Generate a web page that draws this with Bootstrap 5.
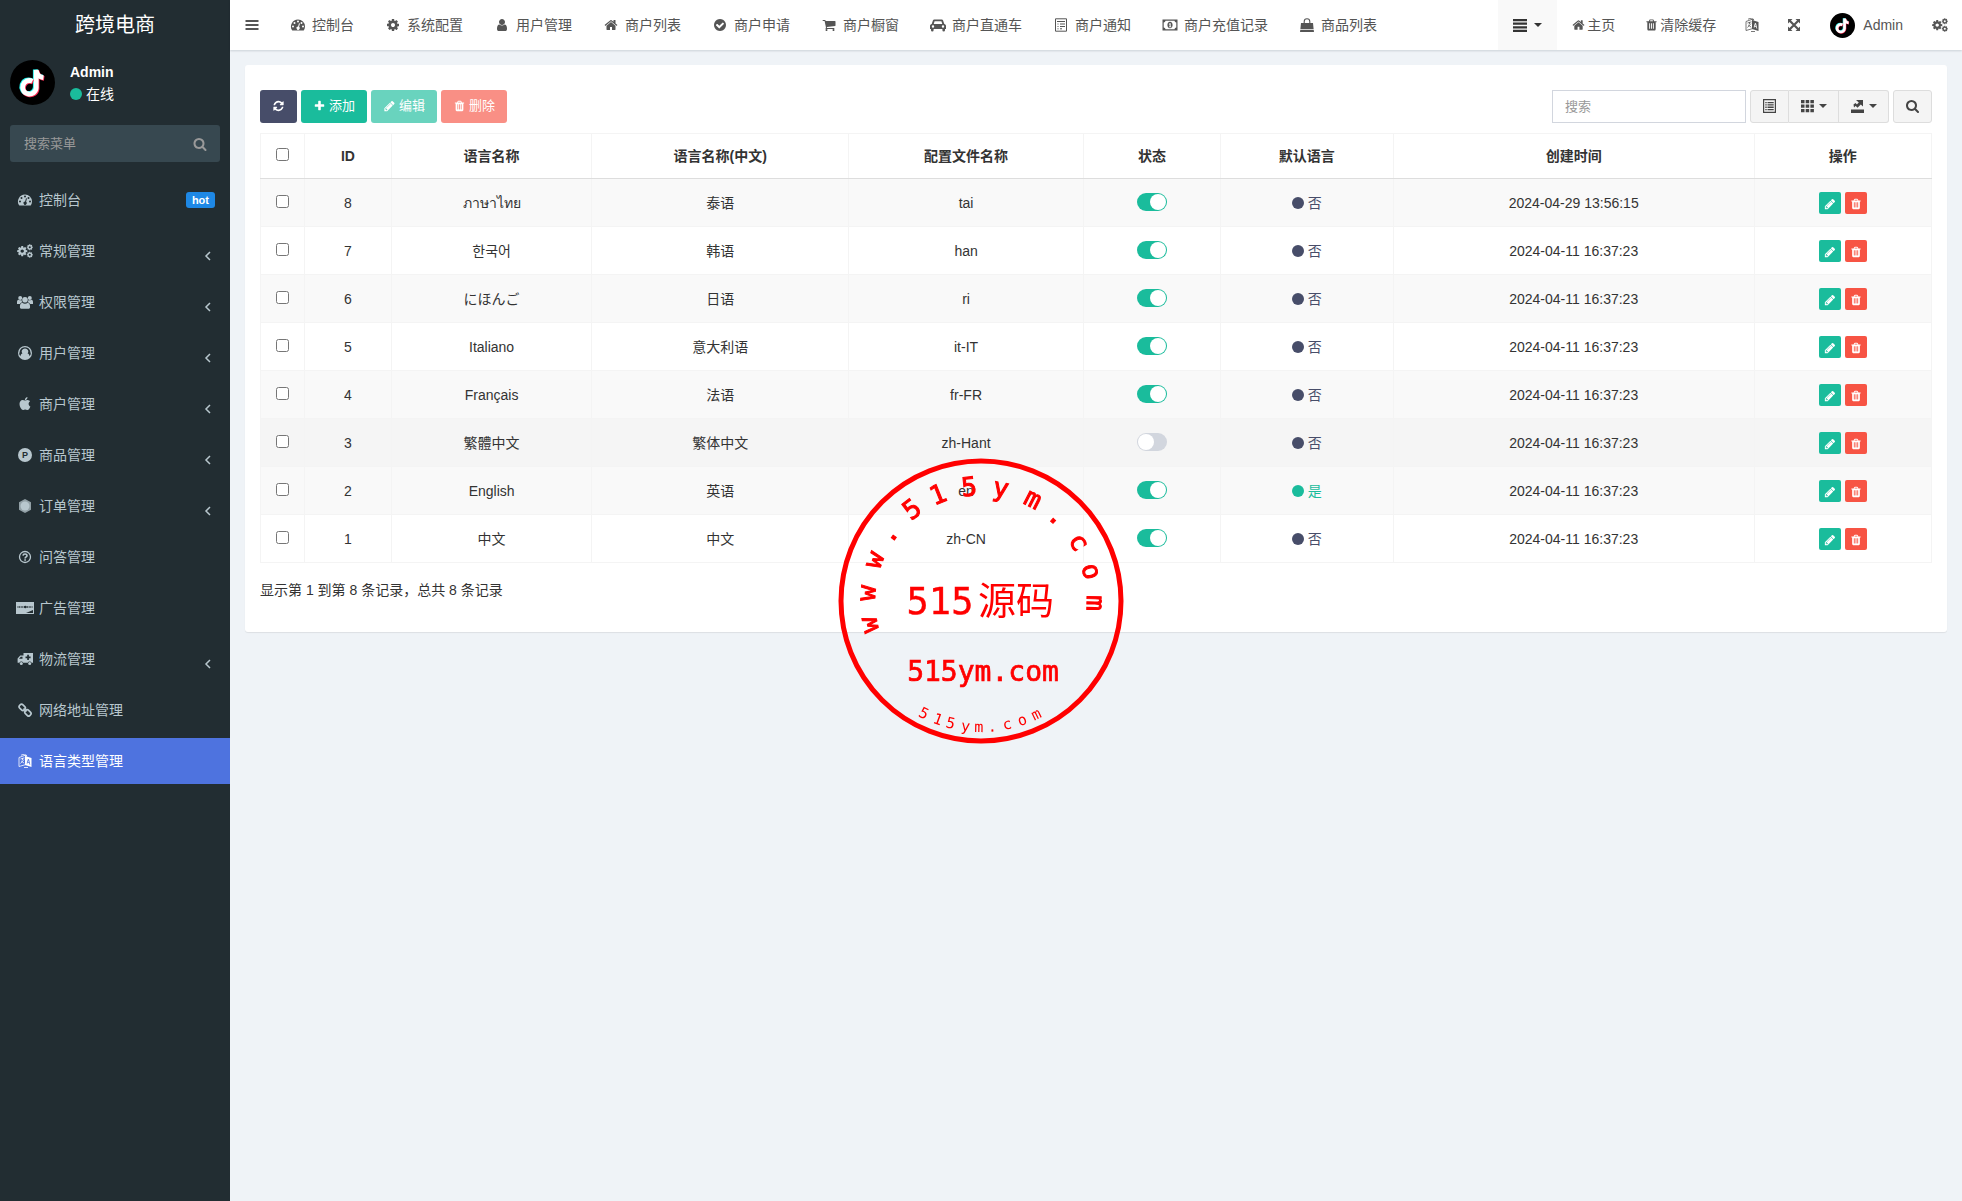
<!DOCTYPE html>
<html lang="zh-CN">
<head>
<meta charset="utf-8">
<meta name="viewport" content="width=device-width, initial-scale=1">
<title>跨境电商</title>
<link href="https://cdn.jsdelivr.net/npm/bootstrap@5.3.0/dist/css/bootstrap.min.css" rel="stylesheet">
<style>
body{font-family:"Liberation Sans","Noto Sans CJK SC","Noto Sans",sans-serif;font-size:14px;line-height:20px;color:#333;background:#eff3f7}
a{text-decoration:none;color:inherit}
.ico{width:14px;height:14px;fill:currentColor;flex:none;vertical-align:-2px}
.ico-fw{width:18px}
.ico-wide{width:16px}
.side{width:230px;flex:none;background:#222d32;color:#b8c7ce}
.brand{height:50px;font-size:20px;color:#fff}
.me{gap:15px;padding:10px;color:#fff;line-height:22px}
.me .pic{width:45px;height:45px}
.dot{display:inline-block;width:12px;height:12px;border-radius:50%;background:currentColor;vertical-align:-1px}
.teal{color:#1abc9c}.navy{color:#474d69}
.find{height:37px;margin:10px 10px 15px;background:#374850;border-radius:3px;color:#999;padding-right:13px}
.find input{background:none;border:0;outline:0;color:#999;font-size:13px;padding:0 14px;min-width:0}
.find input::placeholder,.seek::placeholder{color:#999;opacity:1}
.menu a{height:46px;margin-bottom:5px;padding:0 15px 0 16px;gap:5px}
.menu .chev{margin:9px 2px 0 auto;width:10px;height:10px;fill:none;stroke:currentColor;stroke-width:1.5}
.menu .on{background:#4e73df;color:#fff}
.hot{margin-left:auto;background:#1e88e5;border-radius:3px;font-size:11px;line-height:16px;padding:0 6px;color:#fff;font-weight:700}
.top{height:50px;background:#fff;color:#555;box-shadow:0 1px 2px rgba(0,21,41,.15);position:relative}
.top a,.top button{height:50px;padding:0 15px;gap:5px;white-space:nowrap;border:0;background:none;color:inherit}
.top .tight{gap:2px}
.top .tight .ico{width:13px}
.top .slim{padding:0 14px}
.top .pick{background:#f9f9f9;color:#333;gap:7px}
.caret{border:4px solid transparent;border-top-color:currentColor;border-bottom:0}
.panel{margin:15px;background:#fff;border-radius:3px;padding:25px 15px 32px;box-shadow:0 1px 1px rgba(0,0,0,.08)}
.tool{height:33px;font-size:13px;line-height:18px;border-radius:3px;border:0;padding:0 12px 2px;color:#fff;display:flex;align-items:center;gap:3px}
.tool .ico{width:13px;height:12px}
.tool:disabled{opacity:.65}
.b-navy{background:#474d69}.b-teal{background:#1abc9c}.b-red{background:#f75444}
.grey{background:#f4f4f4;border:1px solid #ddd;color:#444;padding:0 11px 2px;gap:4px}
.grey .ico{width:15px;height:14px}
.seek{width:194px;height:33px;border:1px solid #d2d6de;border-radius:0;font-size:13px;padding:0 12px}
.grid{table-layout:fixed;margin:10px 0 17px;--bs-table-color:#333;--bs-table-striped-color:#333;--bs-table-striped-bg:#f9f9f9;border-color:#f4f4f4;text-align:center;vertical-align:middle}
.grid>:not(caption)>*>*{padding:0 8px;height:48px}
.grid>thead>tr>th{height:45px;border-bottom:1px solid #ddd;vertical-align:middle}
.grid .over>*{--bs-table-bg:#f5f5f5;--bs-table-accent-bg:#f5f5f5}
.grid input{width:13px;height:13px;display:block;margin:0 auto 3px}
.grid .form-check-input{width:30px;height:18px;border:0;margin:0 auto 2px;background-color:#d2d6de;background-size:16px 16px;background-position:1px center;--bs-form-switch-bg:url("data:image/svg+xml,%3csvg xmlns='http://www.w3.org/2000/svg' viewBox='-4 -4 8 8'%3e%3ccircle r='4' fill='%23fff'/%3e%3c/svg%3e");background-image:var(--bs-form-switch-bg);border-radius:9px;float:none;background-repeat:no-repeat;appearance:none}
.grid .form-check-input:checked{background-color:#1abc9c;background-position:13px center}
.act{width:22px;height:22px;border:0;border-radius:2px;color:#fff;padding:0;line-height:18px}
.act .ico{width:12px;height:12px}
.seal{position:fixed;left:50%;top:50%;width:286px;height:286px;transform:translate(-50%,-50%);pointer-events:none;fill:red;font-family:"DejaVu Sans Mono",monospace;text-anchor:middle}
</style>
<script src="https://cdn.jsdelivr.net/npm/bootstrap@5.3.0/dist/js/bootstrap.bundle.min.js"></script>
</head>
<body>
<svg class="d-none" xmlns="http://www.w3.org/2000/svg">
<symbol id="home" viewBox="0 0 1792 1792"><path d="M1472 992v480q0 26-19 45t-45 19h-384v-384h-256v384h-384q-26 0-45-19t-19-45v-480q0-1 .5-3t.5-3l575-474 575 474q1 2 1 6zm223-69l-62 74q-8 9-21 11h-3q-13 0-21-7l-692-577-692 577q-12 8-24 7-13-2-21-11l-62-74q-8-10-7-23.5t11-21.5l719-599q32-26 76-26t76 26l244 204v-195q0-14 9-23t23-9h192q14 0 23 9t9 23v408l219 182q10 8 11 21.5t-7 23.5z"/></symbol>
<symbol id="search" viewBox="0 0 1792 1792"><path d="M1216 832q0-185-131.5-316.5t-316.5-131.5-316.5 131.5-131.5 316.5 131.5 316.5 316.5 131.5 316.5-131.5 131.5-316.5zm512 832q0 52-38 90t-90 38q-54 0-90-38l-343-342q-179 124-399 124-143 0-273.5-55.5t-225-150-150-225-55.5-273.5 55.5-273.5 150-225 225-150 273.5-55.5 273.5 55.5 225 150 150 225 55.5 273.5q0 220-124 399l343 343q37 37 37 90z"/></symbol>
<symbol id="plus" viewBox="0 0 1792 1792"><path d="M1600 736v192q0 40-28 68t-68 28h-416v416q0 40-28 68t-68 28h-192q-40 0-68-28t-28-68v-416h-416q-40 0-68-28t-28-68v-192q0-40 28-68t68-28h416v-416q0-40 28-68t68-28h192q40 0 68 28t28 68v416h416q40 0 68 28t28 68z"/></symbol>
<symbol id="pencil" viewBox="0 0 1792 1792"><path d="M491 1536l91-91-235-235-91 91v107h128v128h107zm523-928q0-22-22-22-10 0-17 7l-542 542q-7 7-7 17 0 22 22 22 10 0 17-7l542-542q7-7 7-17zm-54-192l416 416-832 832h-416v-416zm683 96q0 53-37 90l-166 166-416-416 166-165q36-38 90-38 53 0 91 38l235 234q37 39 37 91z"/></symbol>
<symbol id="trash" viewBox="0 0 1792 1792"><path d="M704 1376v-704q0-14-9-23t-23-9h-64q-14 0-23 9t-9 23v704q0 14 9 23t23 9h64q14 0 23-9t9-23zm256 0v-704q0-14-9-23t-23-9h-64q-14 0-23 9t-9 23v704q0 14 9 23t23 9h64q14 0 23-9t9-23zm256 0v-704q0-14-9-23t-23-9h-64q-14 0-23 9t-9 23v704q0 14 9 23t23 9h64q14 0 23-9t9-23zm-544-992h448l-48-117q-7-9-17-11h-317q-10 2-17 11zm928 32v64q0 14-9 23t-23 9h-96v948q0 83-47 143.5t-113 60.5h-832q-66 0-113-58.5t-47-141.5v-952h-96q-14 0-23-9t-9-23v-64q0-14 9-23t23-9h309l70-167q15-37 54-63t79-26h320q40 0 79 26t54 63l70 167h309q14 0 23 9t9 23z"/></symbol>
<symbol id="refresh" viewBox="0 0 1792 1792"><path d="M1639 1056q0 5-1 7-64 268-268 434.5t-478 166.5q-146 0-282.5-55t-243.5-157l-129 129q-19 19-45 19t-45-19-19-45v-448q0-26 19-45t45-19h448q26 0 45 19t19 45-19 45l-137 137q71 66 161 102t187 36q134 0 250-65t186-179q11-17 53-117 8-23 30-23h192q13 0 22.5 9.5t9.5 22.5zm25-800v448q0 26-19 45t-45 19h-448q-26 0-45-19t-19-45 19-45l138-138q-148-137-349-137-134 0-250 65t-186 179q-11 17-53 117-8 23-30 23h-199q-13 0-22.5-9.5t-9.5-22.5v-7q65-268 270-434.5t480-166.5q146 0 284 55.5t245 156.5l130-129q19-19 45-19t45 19 19 45z"/></symbol>
<symbol id="cog" viewBox="0 0 1792 1792"><path id="gear" d="M1152 896q0-106-75-181t-181-75-181 75-75 181 75 181 181 75 181-75 75-181zm512-109v222q0 12-8 23t-20 13l-185 28q-19 54-39 91 35 50 107 138 10 12 10 25t-9 23q-27 37-99 108t-94 71q-12 0-26-9l-138-108q-44 23-91 38-16 136-29 186-7 28-36 28h-222q-14 0-24.500-8.500t-11.500-21.500l-28-184q-49-16-90-37l-141 107q-10 9-25 9-14 0-25-11-126-114-165-168-7-10-7-23 0-12 8-23 15-21 51-66.500t54-70.500q-27-50-41-99l-183-27q-13-2-21-12.500t-8-23.500v-222q0-12 8-23t19-13l186-28q14-46 39-92-40-57-107-138-10-12-10-24 0-10 9-23 26-36 98.500-107.500t94.500-71.500q13 0 26 10l138 107q44-23 91-38 16-136 29-186 7-28 36-28h222q14 0 24.500 8.500t11.500 21.500l28 184q49 16 90 37l142-107q9-9 24-9 13 0 25 10 129 119 165 170 7 8 7 22 0 12-8 23-15 21-51 66.500t-54 70.500q26 50 41 98l183 28q13 2 21 12.500t8 23.500z"/></symbol>
<symbol id="cogs" viewBox="0 0 16 14"><use href="#gear" transform="translate(-.7 1.2) scale(.0066)"/><use href="#gear" transform="translate(9.300 -.3) scale(.0039)"/><use href="#gear" transform="translate(9.300 7.300) scale(.0039)"/></symbol>
<symbol id="user" viewBox="0 0 1792 1792"><path d="M1536 1399q0 109-62.500 187t-150.500 78h-854q-88 0-150.500-78t-62.500-187q0-85 8.500-160.500t31.500-152 58.500-131 94-89 134.500-34.500q131 128 313 128t313-128q76 0 134.500 34.500t94 89 58.500 131 31.500 152 8.500 160.500zm-256-887q0 159-112.500 271.500t-271.500 112.500-271.500-112.500-112.500-271.500 112.500-271.500 271.500-112.500 271.500 112.500 112.500 271.500z"/></symbol>
<symbol id="check" viewBox="0 0 1792 1792"><path d="M1412 734q0-28-18-46l-91-90q-19-19-45-19t-45 19l-408 407-226-226q-19-19-45-19t-45 19l-91 90q-18 18-18 46 0 27 18 45l362 362q19 19 45 19 27 0 46-19l543-543q18-18 18-45zm252 162q0 209-103 385.500t-279.500 279.500-385.500 103-385.500-103-279.500-279.500-103-385.500 103-385.500 279.500-279.500 385.500-103 385.500 103 279.500 279.500 103 385.500z"/></symbol>
<symbol id="cart" viewBox="0 0 1792 1792"><path d="M704 1536q0 52-38 90t-90 38-90-38-38-90 38-90 90-38 90 38 38 90zm896 0q0 52-38 90t-90 38-90-38-38-90 38-90 90-38 90 38 38 90zm128-1088v512q0 24-16.500 42.500t-40.500 21.500l-1044 122q13 60 13 70 0 16-24 64h920q26 0 45 19t19 45-19 45-45 19h-1024q-26 0-45-19t-19-45q0-11 8-31.500t16-36 21.500-40 15.500-29.500l-177-823h-204q-26 0-45-19t-19-45 19-45 45-19h256q16 0 28.500 6.500t19.500 15.500 13 24.500 8 26 5.500 29.500 4.500 26h1201q26 0 45 19t19 45z"/></symbol>
<symbol id="apple" viewBox="0 0 1792 1792"><path d="M1585 1215q-39 125-123 250-129 196-257 196-49 0-140-32-86-32-151-32-61 0-142 33-81 34-132 34-152 0-301-259-147-261-147-503 0-228 113-374 113-144 284-144 72 0 177 30 104 30 138 30 45 0 143-34 102-34 173-34 119 0 213 65 52 36 104 100-79 67-114 118-65 94-65 207 0 124 69 223t158 126zm-376-1173q0 61-29 136-30 75-93 138-54 54-108 72-37 11-104 17 3-149 78-257 74-107 250-148 1 3 2.500 11t2.500 11q0 4 .5 10t.5 10z"/></symbol>
<symbol id="dash" viewBox="0 0 14 14"><path fill-rule="evenodd" d="M7 1.500a7 7 0 0 1 7 7c0 1.400-.4 2.700-1.100 3.800-.2.200-.4.300-.6.300H1.700c-.2 0-.5-.1-.6-.3A7 7 0 0 1 7 1.500zM2 7.500a1 1 0 1 0 0 2 1 1 0 0 0 0-2zm1.500-3.500a1 1 0 1 0 0 2 1 1 0 0 0 0-2zM7 2.500a1 1 0 1 0 0 2 1 1 0 0 0 0-2zm3.500 1.500a1 1 0 1 0 0 2 1 1 0 0 0 0-2zM12 7.500a1 1 0 1 0 0 2 1 1 0 0 0 0-2zM8 5.300l-.9 3.200a1.600 1.600 0 1 0 1 .3L9 5.600z"/></symbol>
<symbol id="bars" viewBox="0 0 14 14"><path d="M.5 2h13v2H.5zm0 4h13v2H.5zm0 4h13v2H.5z"/></symbol>
<symbol id="list" viewBox="0 0 14 14"><path d="M0 1h14v2.200H0zm0 3.600h14v2.200H0zm0 3.600h14v2.200H0zm0 3.600h14V14H0z"/></symbol>
<symbol id="car" viewBox="0 0 16 14"><path fill-rule="evenodd" d="M4.300 1.500h7.400c.7 0 1.200.4 1.400 1l1.200 3.400c1 .3 1.700 1 1.700 2V11h-1v1.200a1.300 1.300 0 0 1-2.600 0V11H3.600v1.200a1.300 1.300 0 0 1-2.600 0V11H0V7.900c0-1 .7-1.700 1.700-2L2.900 2.500c.2-.6.700-1 1.400-1zm.3 1.700L3.700 6h8.600l-.9-2.800zM3 7.300a1.200 1.200 0 1 0 0 2.400 1.200 1.200 0 0 0 0-2.400zm10 0a1.200 1.200 0 1 0 0 2.400 1.200 1.200 0 0 0 0-2.400z"/></symbol>
<symbol id="note" viewBox="0 0 14 14"><path fill="none" stroke="currentColor" d="M1.500.8h11v12.400h-11zM3 3.500h8M3.500 6h1M6 6h5M3.500 8.500h1M6 8.500h5M3.500 10.800h1M6 10.800h2"/></symbol>
<symbol id="money" viewBox="0 0 16 14"><path fill-rule="evenodd" d="M.5 1.500h15v11H.5zm3 1.300a2 2 0 0 1-1.800 1.800v4.800a2 2 0 0 1 1.800 1.800h9a2 2 0 0 1 1.800-1.800V4.600a2 2 0 0 1-1.800-1.800zM8 3.800c1.600 0 2.600 1.400 2.600 3.200S9.600 10.200 8 10.200 5.400 8.800 5.400 7 6.400 3.800 8 3.800zm-.3 1.400-1 .8.500.6.400-.2v2H7v.8h2.200v-.8h-.5v-3.200z"/></symbol>
<symbol id="bag" viewBox="0 0 14 14"><path d="M1 5h12l.6 6H.4zM.3 11.800h13.400L14 14H0z"/><path fill="none" stroke="currentColor" stroke-width="1.100" d="M4.200 7V3.500a2.800 2.800 0 0 1 5.600 0V7"/></symbol>
<symbol id="lang" viewBox="0 0 14 14"><path fill="none" stroke="currentColor" stroke-width=".8" d="M1 3.500 8 1v9.500L1 12.500zM2.500 5l4-1.200M4.500 4v2M2.500 9.500 6 5.500M3.200 7l3 2.200M3 1.200 5 .5l4 1M6 13.500h4"/><path fill-rule="evenodd" d="M7 2l6.500 2v9L7 11zm3 3L8.500 9.600l.8.200.4-1.200 1.400.4.400 1.400.8.300L11 5.300zm.3 1.300.5 1.800-1-.3z"/></symbol>
<symbol id="expand" viewBox="0 0 14 14"><path d="M1 1h4.500L1 5.500zM13 1v4.500L8.500 1zM1 13V8.500L5.500 13zm12 0H8.500L13 8.500z"/><path stroke="currentColor" stroke-width="2.200" d="m2.500 2.500 9 9m0-9-9 9"/></symbol>
<symbol id="users" viewBox="0 0 16 14"><circle cx="3.200" cy="3" r="2"/><circle cx="12.800" cy="3" r="2"/><circle cx="8" cy="4.800" r="2.800"/><path d="M0 9V7c0-1.500.8-2.300 1.700-2.300.9.700 2 .8 2.800.4.100 1 .4 1.600.9 2.200-1 .1-1.900.7-2.400 1.700zm16 0V7c0-1.500-.8-2.300-1.700-2.300-.9.700-2 .8-2.800.4-.1 1-.4 1.600-.9 2.200 1 .1 1.900.7 2.400 1.700zM2.900 12c0-2.300.8-4 2.400-4.200 1.700 1.400 3.700 1.400 5.400 0 1.600.2 2.400 1.900 2.400 4.200 0 1-.7 1.800-1.700 1.800H4.600c-1 0-1.700-.8-1.700-1.800z"/></symbol>
<symbol id="person" viewBox="0 0 14 14"><path fill-rule="evenodd" d="M7 0a7 7 0 1 1 0 14A7 7 0 0 1 7 0zm0 1.300a5.700 5.700 0 0 0-4.600 9c.3-1.500 1-2.500 2-2.700a3.200 3.200 0 1 1 5.200 0c1 .2 1.700 1.200 2 2.700A5.700 5.700 0 0 0 7 1.300z"/></symbol>
<symbol id="prod" viewBox="0 0 14 14"><circle cx="7" cy="7" r="7"/><text x="7" y="10.300" text-anchor="middle" font-size="9" font-weight="700" fill="#222d32">P</text></symbol>
<symbol id="hex" viewBox="0 0 14 14"><path opacity=".75" d="m7 0 6 3.300v7.400L7 14l-6-3.300V3.300z"/><circle cx="7" cy="7" r="4.500"/></symbol>
<symbol id="ask" viewBox="0 0 14 14"><g fill="none" stroke="currentColor"><circle cx="7" cy="7" r="5.500" stroke-width="1.300"/><path stroke-width="1.600" d="M5 5.600c.2-2.200 4-2 4 .1C9 7 7.100 6.900 7.100 8.500M7.100 9.300v1.400"/></g></symbol>
<symbol id="cardic" viewBox="0 0 18 12"><path fill-rule="evenodd" d="M0 0h18v12H0zm17 8-7 3h7z"/><path stroke="#222d32" stroke-width="1.500" stroke-dasharray="1 .6" d="M1.500 5h15"/><circle cx="9.300" cy="5" r="1.200" fill="#222d32"/></symbol>
<symbol id="truck" viewBox="0 0 16 14"><path fill-rule="evenodd" d="M6.500 1H16v9.800h-1.400a2 2 0 0 0-3.800 0H6.200a2 2 0 0 0-3.800 0H.6V6.500L3.200 3.500h3.300zM5.500 4.700H3.800L2 6.800h3.500zm4.700-1.900v1.700H8.500v1.700h1.700v1.700h1.700V6.200h1.700V4.500h-1.700V2.800z"/><circle cx="4.300" cy="11.500" r="1.500"/><circle cx="12.700" cy="11.500" r="1.500"/></symbol>
<symbol id="chain" viewBox="0 0 14 14"><g fill="none" stroke="currentColor" stroke-width="1.700"><rect x="1" y="2" width="6.500" height="4.600" rx="2" transform="rotate(45 4.200 4.300)"/><rect x="6.700" y="7.600" width="6.500" height="4.600" rx="2" transform="rotate(45 9.900 9.900)"/><path d="m5.500 5.500 3 3"/></g></symbol>
<symbol id="detail" viewBox="0 0 15 14"><path fill-rule="evenodd" d="M1 0h13v14H1zm1.200 1.200v11.600h10.600V1.200zM3.300 3h1.400v1.300H3.300zm2.200 0h6.200v1.300H5.500zM3.300 5.300h1.400v1.300H3.300zm2.200 0h6.200v1.300H5.500zM3.300 7.600h1.400v1.300H3.300zm2.200 0h6.200v1.300H5.500zM3.300 9.900h1.400v1.300H3.300zm2.200 0h6.200v1.300H5.500z"/></symbol>
<symbol id="cells" viewBox="0 0 15 14"><path d="M1 1h3.500v3.300H1zm4.700 0h3.500v3.300H5.700zm4.700 0h3.500v3.300h-3.500zM1 5.500h3.500v3.300H1zm4.700 0h3.500v3.300H5.700zm4.700 0h3.500v3.300h-3.500zM1 10h3.500v3.300H1zm4.700 0h3.500v3.300H5.700zm4.700 0h3.500v3.300h-3.500z"/></symbol>
<symbol id="export" viewBox="0 0 15 14"><path d="M1 10.500h13V14H1zM6 1h7v6.500l-2.200-2-3.300 3.300-2-2 3.300-3.300zM3.500 5.500l2-1.500L7 5.500 4 8.500z"/></symbol>
<symbol id="tune" viewBox="0 0 45 45"><circle cx="22.500" cy="22.500" r="22.500" fill="#000"/><g fill="none" stroke-width="4.800"><path stroke="#25f4ee" d="M21.500 20.500a6.800 6.800 0 1 0 3.800 6.700V9.500c.5 3.800 3.300 7 7.200 7.500"/><path stroke="#fe2c55" d="M23.200 22a6.800 6.800 0 1 0 3.800 6.700V10.800c.5 3.800 3.300 7 7.200 7.500"/><path stroke="#fff" d="M22.400 21.200a6.800 6.800 0 1 0 3.800 6.700V10c.5 3.800 3.300 7.200 7.200 7.700"/></g></symbol>
</svg>

<div class="d-flex min-vh-100">
<aside class="side">
<a href="#" class="brand d-flex align-items-center justify-content-center">跨境电商</a>
<div class="me d-flex align-items-center"><svg class="pic"><use href="#tune"/></svg><div><b class="d-block">Admin</b><a href="#" class="d-block"><span class="dot teal"></span> 在线</a></div></div>
<form class="find d-flex align-items-center"><input class="flex-grow-1" type="text" placeholder="搜索菜单" aria-label="搜索菜单"><svg class="ico"><use href="#search"/></svg></form>
<nav class="menu">
<a href="#" class="d-flex align-items-center"><svg class="ico ico-fw"><use href="#dash"/></svg>控制台<span class="hot">hot</span></a>
<a href="#" class="d-flex align-items-center"><svg class="ico ico-fw"><use href="#cogs"/></svg>常规管理<svg class="chev" viewBox="0 0 10 10"><path d="M7 1 3 5l4 4"/></svg></a>
<a href="#" class="d-flex align-items-center"><svg class="ico ico-fw"><use href="#users"/></svg>权限管理<svg class="chev" viewBox="0 0 10 10"><path d="M7 1 3 5l4 4"/></svg></a>
<a href="#" class="d-flex align-items-center"><svg class="ico ico-fw"><use href="#person"/></svg>用户管理<svg class="chev" viewBox="0 0 10 10"><path d="M7 1 3 5l4 4"/></svg></a>
<a href="#" class="d-flex align-items-center"><svg class="ico ico-fw"><use href="#apple"/></svg>商户管理<svg class="chev" viewBox="0 0 10 10"><path d="M7 1 3 5l4 4"/></svg></a>
<a href="#" class="d-flex align-items-center"><svg class="ico ico-fw"><use href="#prod"/></svg>商品管理<svg class="chev" viewBox="0 0 10 10"><path d="M7 1 3 5l4 4"/></svg></a>
<a href="#" class="d-flex align-items-center"><svg class="ico ico-fw"><use href="#hex"/></svg>订单管理<svg class="chev" viewBox="0 0 10 10"><path d="M7 1 3 5l4 4"/></svg></a>
<a href="#" class="d-flex align-items-center"><svg class="ico ico-fw"><use href="#ask"/></svg>问答管理</a>
<a href="#" class="d-flex align-items-center"><svg class="ico ico-fw"><use href="#cardic"/></svg>广告管理</a>
<a href="#" class="d-flex align-items-center"><svg class="ico ico-fw"><use href="#truck"/></svg>物流管理<svg class="chev" viewBox="0 0 10 10"><path d="M7 1 3 5l4 4"/></svg></a>
<a href="#" class="d-flex align-items-center"><svg class="ico ico-fw"><use href="#chain"/></svg>网络地址管理</a>
<a href="#" class="d-flex align-items-center on"><svg class="ico ico-fw"><use href="#lang"/></svg>语言类型管理</a>
</nav>
</aside>

<div class="flex-grow-1">
<header class="top d-flex">
<button type="button" aria-label="菜单" class="d-flex align-items-center"><svg class="ico"><use href="#bars"/></svg></button>
<nav class="d-flex">
<a href="#" class="d-flex align-items-center"><svg class="ico ico-fw"><use href="#dash"/></svg>控制台</a>
<a href="#" class="d-flex align-items-center"><svg class="ico ico-fw"><use href="#cog"/></svg>系统配置</a>
<a href="#" class="d-flex align-items-center"><svg class="ico ico-fw"><use href="#user"/></svg>用户管理</a>
<a href="#" class="d-flex align-items-center"><svg class="ico ico-fw"><use href="#home"/></svg>商户列表</a>
<a href="#" class="d-flex align-items-center"><svg class="ico ico-fw"><use href="#check"/></svg>商户申请</a>
<a href="#" class="d-flex align-items-center"><svg class="ico ico-fw"><use href="#cart"/></svg>商户橱窗</a>
<a href="#" class="d-flex align-items-center"><svg class="ico ico-fw"><use href="#car"/></svg>商户直通车</a>
<a href="#" class="d-flex align-items-center"><svg class="ico ico-fw"><use href="#note"/></svg>商户通知</a>
<a href="#" class="d-flex align-items-center"><svg class="ico ico-fw"><use href="#money"/></svg>商户充值记录</a>
<a href="#" class="d-flex align-items-center"><svg class="ico ico-fw"><use href="#bag"/></svg>商品列表</a>
</nav>
<div class="d-flex ms-auto">
<button type="button" class="pick d-flex align-items-center" aria-label="更多"><svg class="ico"><use href="#list"/></svg><span class="caret"></span></button>
<a href="#" class="tight d-flex align-items-center"><svg class="ico"><use href="#home"/></svg>主页</a>
<a href="#" class="tight d-flex align-items-center"><svg class="ico"><use href="#trash"/></svg>清除缓存</a>
<a href="#" class="slim d-flex align-items-center" aria-label="语言"><svg class="ico"><use href="#lang"/></svg></a>
<a href="#" class="slim d-flex align-items-center" aria-label="全屏"><svg class="ico"><use href="#expand"/></svg></a>
<a href="#" class="d-flex align-items-center gap-2"><svg width="25" height="25"><use href="#tune"/></svg>Admin</a>
<a href="#" class="slim d-flex align-items-center" aria-label="设置"><svg class="ico ico-wide"><use href="#cogs"/></svg></a>
</div>
</header>

<main class="panel">
<div class="d-flex">
<div class="d-flex gap-1">
<button type="button" class="tool b-navy" aria-label="刷新"><svg class="ico"><use href="#refresh"/></svg></button>
<button type="button" class="tool b-teal"><svg class="ico"><use href="#plus"/></svg>添加</button>
<button type="button" class="tool b-teal" disabled><svg class="ico"><use href="#pencil"/></svg>编辑</button>
<button type="button" class="tool b-red" disabled><svg class="ico"><use href="#trash"/></svg>删除</button>
</div>
<div class="d-flex ms-auto">
<input class="seek" type="search" placeholder="搜索" aria-label="搜索">
<div class="btn-group mx-1">
<button type="button" class="tool grey rounded-end-0" aria-label="切换"><svg class="ico"><use href="#detail"/></svg></button>
<button type="button" class="tool grey rounded-0 border-start-0" aria-label="列"><svg class="ico"><use href="#cells"/></svg><span class="caret"></span></button>
<button type="button" class="tool grey rounded-start-0 border-start-0" aria-label="导出"><svg class="ico"><use href="#export"/></svg><span class="caret"></span></button>
</div>
<button type="button" class="tool grey" aria-label="普通搜索"><svg class="ico"><use href="#search"/></svg></button>
</div>
</div>
<table class="table table-bordered table-striped grid">
<colgroup><col style="width:2.63%"><col style="width:5.200%"><col style="width:12%"><col style="width:15.370%"><col style="width:14.050%"><col style="width:8.200%"><col style="width:10.340%"><col style="width:21.600%"><col></colgroup>
<thead><tr><th><input type="checkbox" aria-label="全选"></th><th>ID</th><th>语言名称</th><th>语言名称(中文)</th><th>配置文件名称</th><th>状态</th><th>默认语言</th><th>创建时间</th><th>操作</th></tr></thead>
<tbody>
<tr><td><input type="checkbox" aria-label="选择 8"></td><td>8</td><td lang="th">ภาษาไทย</td><td>泰语</td><td>tai</td><td><input class="form-check-input" type="checkbox" role="switch" aria-label="状态" checked></td><td><span class="navy"><span class="dot"></span> 否</span></td><td>2024-04-29 13:56:15</td><td><button type="button" class="act b-teal" aria-label="编辑"><svg class="ico"><use href="#pencil"/></svg></button> <button type="button" class="act b-red" aria-label="删除"><svg class="ico"><use href="#trash"/></svg></button></td></tr>
<tr><td><input type="checkbox" aria-label="选择 7"></td><td>7</td><td lang="ko">한국어</td><td>韩语</td><td>han</td><td><input class="form-check-input" type="checkbox" role="switch" aria-label="状态" checked></td><td><span class="navy"><span class="dot"></span> 否</span></td><td>2024-04-11 16:37:23</td><td><button type="button" class="act b-teal" aria-label="编辑"><svg class="ico"><use href="#pencil"/></svg></button> <button type="button" class="act b-red" aria-label="删除"><svg class="ico"><use href="#trash"/></svg></button></td></tr>
<tr><td><input type="checkbox" aria-label="选择 6"></td><td>6</td><td lang="ja">にほんご</td><td>日语</td><td>ri</td><td><input class="form-check-input" type="checkbox" role="switch" aria-label="状态" checked></td><td><span class="navy"><span class="dot"></span> 否</span></td><td>2024-04-11 16:37:23</td><td><button type="button" class="act b-teal" aria-label="编辑"><svg class="ico"><use href="#pencil"/></svg></button> <button type="button" class="act b-red" aria-label="删除"><svg class="ico"><use href="#trash"/></svg></button></td></tr>
<tr><td><input type="checkbox" aria-label="选择 5"></td><td>5</td><td>Italiano</td><td>意大利语</td><td>it-IT</td><td><input class="form-check-input" type="checkbox" role="switch" aria-label="状态" checked></td><td><span class="navy"><span class="dot"></span> 否</span></td><td>2024-04-11 16:37:23</td><td><button type="button" class="act b-teal" aria-label="编辑"><svg class="ico"><use href="#pencil"/></svg></button> <button type="button" class="act b-red" aria-label="删除"><svg class="ico"><use href="#trash"/></svg></button></td></tr>
<tr><td><input type="checkbox" aria-label="选择 4"></td><td>4</td><td>Français</td><td>法语</td><td>fr-FR</td><td><input class="form-check-input" type="checkbox" role="switch" aria-label="状态" checked></td><td><span class="navy"><span class="dot"></span> 否</span></td><td>2024-04-11 16:37:23</td><td><button type="button" class="act b-teal" aria-label="编辑"><svg class="ico"><use href="#pencil"/></svg></button> <button type="button" class="act b-red" aria-label="删除"><svg class="ico"><use href="#trash"/></svg></button></td></tr>
<tr class="over"><td><input type="checkbox" aria-label="选择 3"></td><td>3</td><td>繁體中文</td><td>繁体中文</td><td>zh-Hant</td><td><input class="form-check-input" type="checkbox" role="switch" aria-label="状态"></td><td><span class="navy"><span class="dot"></span> 否</span></td><td>2024-04-11 16:37:23</td><td><button type="button" class="act b-teal" aria-label="编辑"><svg class="ico"><use href="#pencil"/></svg></button> <button type="button" class="act b-red" aria-label="删除"><svg class="ico"><use href="#trash"/></svg></button></td></tr>
<tr><td><input type="checkbox" aria-label="选择 2"></td><td>2</td><td>English</td><td>英语</td><td>en</td><td><input class="form-check-input" type="checkbox" role="switch" aria-label="状态" checked></td><td><span class="teal"><span class="dot"></span> 是</span></td><td>2024-04-11 16:37:23</td><td><button type="button" class="act b-teal" aria-label="编辑"><svg class="ico"><use href="#pencil"/></svg></button> <button type="button" class="act b-red" aria-label="删除"><svg class="ico"><use href="#trash"/></svg></button></td></tr>
<tr><td><input type="checkbox" aria-label="选择 1"></td><td>1</td><td>中文</td><td>中文</td><td>zh-CN</td><td><input class="form-check-input" type="checkbox" role="switch" aria-label="状态" checked></td><td><span class="navy"><span class="dot"></span> 否</span></td><td>2024-04-11 16:37:23</td><td><button type="button" class="act b-teal" aria-label="编辑"><svg class="ico"><use href="#pencil"/></svg></button> <button type="button" class="act b-red" aria-label="删除"><svg class="ico"><use href="#trash"/></svg></button></td></tr>
</tbody>
</table>
<div>显示第 1 到第 8 条记录，总共 8 条记录</div>
</main>
</div>
</div>

<svg class="seal" viewBox="-143 -143 286 286">
<circle r="140" fill="none" stroke="red" stroke-width="5"/>
<g font-size="26" stroke="red" stroke-width="1">
<text transform="rotate(-102)" y="-106">w</text><text transform="rotate(-86)" y="-106">w</text><text transform="rotate(-69)" y="-106">w</text><text transform="rotate(-54)" y="-106">.</text><text transform="rotate(-37)" y="-106">5</text><text transform="rotate(-22)" y="-106">1</text><text transform="rotate(-6)" y="-106">5</text><text transform="rotate(10)" y="-106">y</text><text transform="rotate(27)" y="-106">m</text><text transform="rotate(42)" y="-106">.</text><text transform="rotate(59)" y="-106">c</text><text transform="rotate(75)" y="-106">o</text><text transform="rotate(91)" y="-106">m</text>
</g>
<text x="-41" y="13" font-size="37" stroke="red" stroke-width=".4">515</text>
<text x="35" y="13" font-size="38" font-family="Noto Sans CJK SC">源码</text>
<text x="2" y="80" font-size="28" stroke="red" stroke-width=".7">515ym.com</text>
<g font-size="15">
<text transform="rotate(27)" y="131">5</text><text transform="rotate(20)" y="131">1</text><text transform="rotate(14)" y="131">5</text><text transform="rotate(7)" y="131">y</text><text transform="rotate(1)" y="131">m</text><text transform="rotate(-5)" y="131">.</text><text transform="rotate(-12)" y="131">c</text><text transform="rotate(-19)" y="131">o</text><text transform="rotate(-26)" y="131">m</text>
</g>
</svg>
</body>
</html>
